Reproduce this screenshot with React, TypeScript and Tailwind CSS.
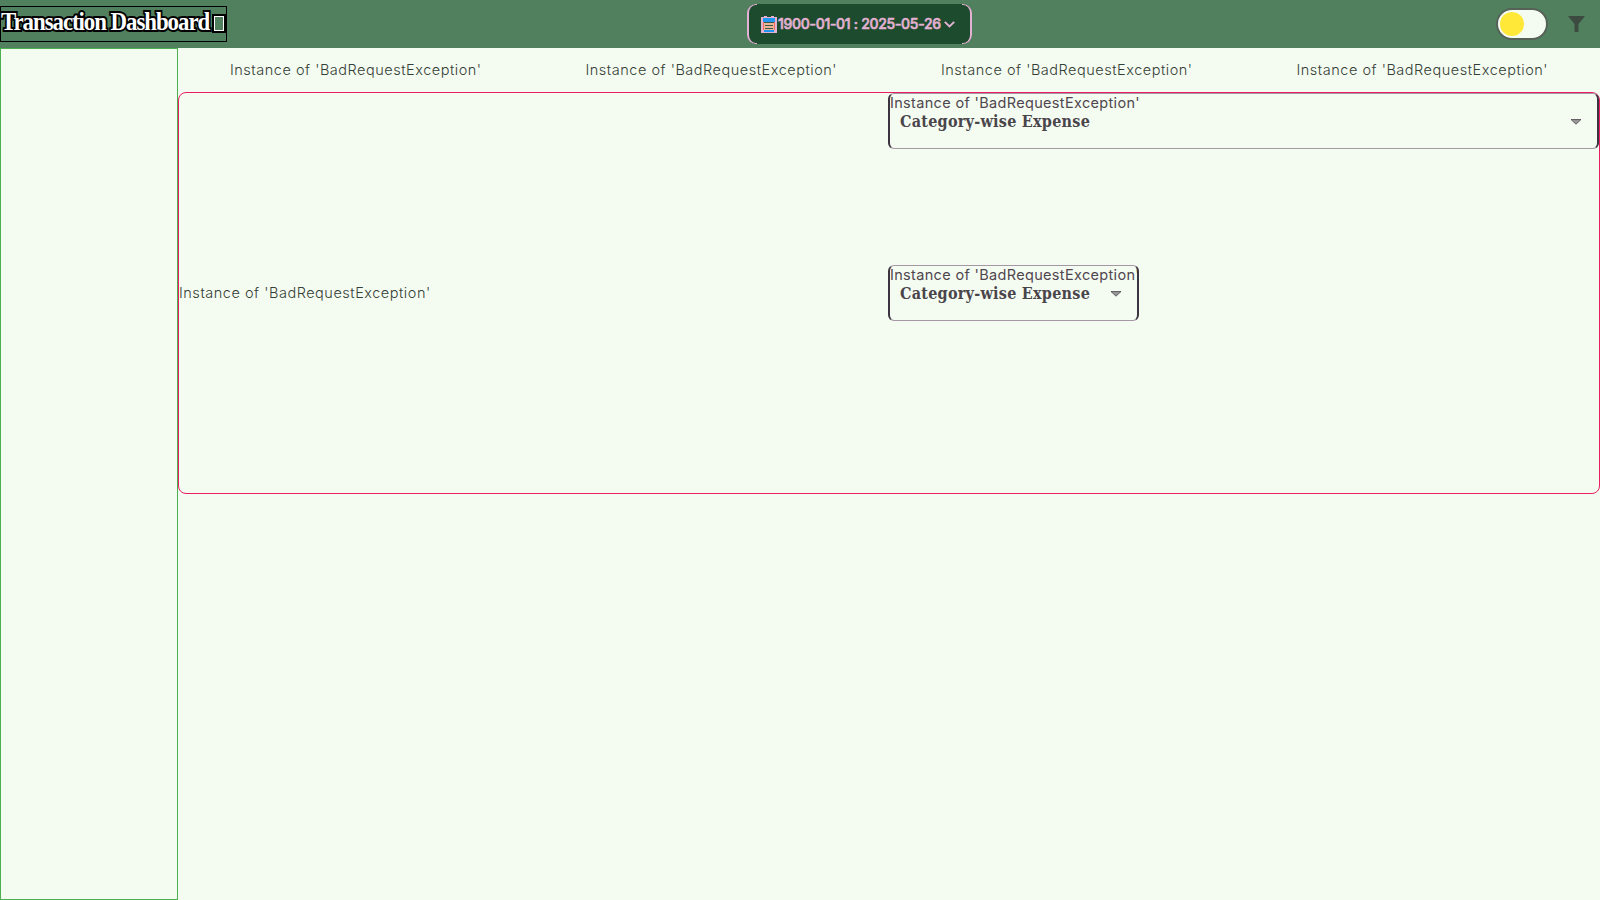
const MESSAGE = "Instance of 'BadRequestException'";

function ErrorText({ tone = "font-light tracking-[0.52px]" }: { tone?: string }) {
  return (
    <span
      className={`block whitespace-nowrap font-['Inter','Noto_Sans',sans-serif] text-[14.5px] leading-[18px] ${tone}`}
    >
      {MESSAGE}
    </span>
  );
}

function Title() {
  return (
    <h1 className="mt-[6px] flex h-[36px] w-[227px] shrink-0 items-start border border-black">
      <span className="w-[211px] shrink-0 origin-left scale-x-[0.88] whitespace-nowrap font-['Liberation_Serif',serif] text-[26px] font-bold leading-[29px] tracking-[-1.2px] text-white [-webkit-text-stroke:4px_black] [paint-order:stroke_fill]">
        Transaction Dashboard
      </span>
      <span className="z-10 mt-[7px] h-[19px] w-[14px] shrink-0 border-2 border-black bg-[#50805e]">
        <span className="block h-full w-full border border-white" />
      </span>
    </h1>
  );
}

function CalendarIcon() {
  return (
    <svg width="16" height="17" viewBox="0 0 16 17" shapeRendering="crispEdges">
      <path d="M0 1h3V0h3v1h4V0h3v1h3v16H0z" fill="#e3b1d3" />
      <path d="M2 2h12v4H2zM3 14h10v2H3z" fill="#2196f3" />
      <path d="M3 6h10v8H3z" fill="#e8b49a" />
      <path d="M3 6h10v1H3zM4 9h8v1H4zM4 12h8v1H4z" fill="#3d5945" />
      <path d="M2 6h1v8H2zM13 6h1v8h-1z" fill="#f36f5b" />
    </svg>
  );
}

function DateRange() {
  return (
    <button className="relative flex h-[40px] w-[225px] items-center rounded-[9px] bg-[#1c4b2d] pl-[14px] text-[#e3b1d3]">
      <span className="absolute inset-y-0 left-0 w-[10px] rounded-l-[9px] border-l-2 border-y border-[#e3b1d3]" />
      <span className="absolute inset-y-0 right-0 w-[10px] rounded-r-[9px] border-r-2 border-y border-[#e3b1d3]" />
      <CalendarIcon />
      <span className="ml-px w-[164px] whitespace-nowrap text-left font-['Inter',sans-serif] text-[14px] font-medium leading-[18px] tracking-[-0.3px] [-webkit-text-stroke:0.6px_#e3b1d3]">
        1900-01-01 : 2025-05-26
      </span>
      <svg className="ml-[2px]" width="11" height="7" viewBox="0 0 11 7" fill="none" stroke="currentColor" strokeWidth="2">
        <path d="M.8.9 5.5 5.4 10.2.9" />
      </svg>
    </button>
  );
}

function ThemeSwitch() {
  return (
    <button aria-label="Theme" className="flex h-[32px] w-[52px] items-center rounded-full border-2 border-[#566158] bg-[#f4fcf1] pl-[2px]">
      <span className="h-[24px] w-[24px] rounded-full bg-[#ffe838]" />
    </button>
  );
}

function CategorySelect({ className, arrow }: { className: string; arrow: string }) {
  return (
    <div className={`-ml-px h-[56px] rounded-[6px] border-x-2 border-y border-x-[#3c3440] border-y-[#a597a5] ${className}`}>
      <div className="overflow-hidden pl-px text-[#50464f]">
        <ErrorText tone="-ml-px font-normal tracking-[0.33px]" />
      </div>
      <div className={`mt-px flex items-center justify-between pl-[10px] ${arrow}`}>
        <span className="whitespace-nowrap font-['DejaVu_Serif_Condensed','DejaVu_Serif',serif] text-[16px] font-bold leading-[18px] tracking-[0.25px] text-[#4a454b]">
          Category-wise Expense
        </span>
        <svg width="12" height="6" viewBox="0 0 12 6">
          <path d="M1 .5h10L6 5.2z" fill="#969696" stroke="#4e4850" strokeWidth=".8" />
        </svg>
      </div>
    </div>
  );
}

export default function App() {
  return (
    <div className="flex h-[900px] w-[1600px] flex-col overflow-hidden bg-[#f4fcf1] text-[#344037]">
      <header className="flex h-[48px] shrink-0 justify-between bg-[#50805e]">
        <Title />
        <div className="ml-[520px] flex items-center">
          <DateRange />
        </div>
        <div className="ml-auto flex items-center gap-[20px] pr-[15px]">
          <ThemeSwitch />
          <svg width="17" height="16" viewBox="0 0 17 16" fill="#3d4a40">
            <path d="M.5 0h16v.8L10.5 8v7q0 1-1 1h-2q-1 0-1-1V8L.5.8z" />
          </svg>
        </div>
      </header>
      <div className="flex min-h-0 flex-1">
        <aside className="w-[178px] shrink-0 border border-[#4caf50]" />
        <main className="min-w-0 flex-1">
          <div className="grid h-[44px] grid-cols-4 place-items-center">
            <ErrorText />
            <ErrorText />
            <ErrorText />
            <ErrorText />
          </div>
          <section className="grid h-[402px] grid-cols-2 rounded-[8px] border border-[#e91e63]">
            <div className="flex items-center">
              <ErrorText />
            </div>
            <div className="flex flex-col">
              <CategorySelect className="w-[711px]" arrow="pr-[15px]" />
              <CategorySelect className="mt-[116px] w-[251px]" arrow="pr-[15px]" />
            </div>
          </section>
        </main>
      </div>
    </div>
  );
}
